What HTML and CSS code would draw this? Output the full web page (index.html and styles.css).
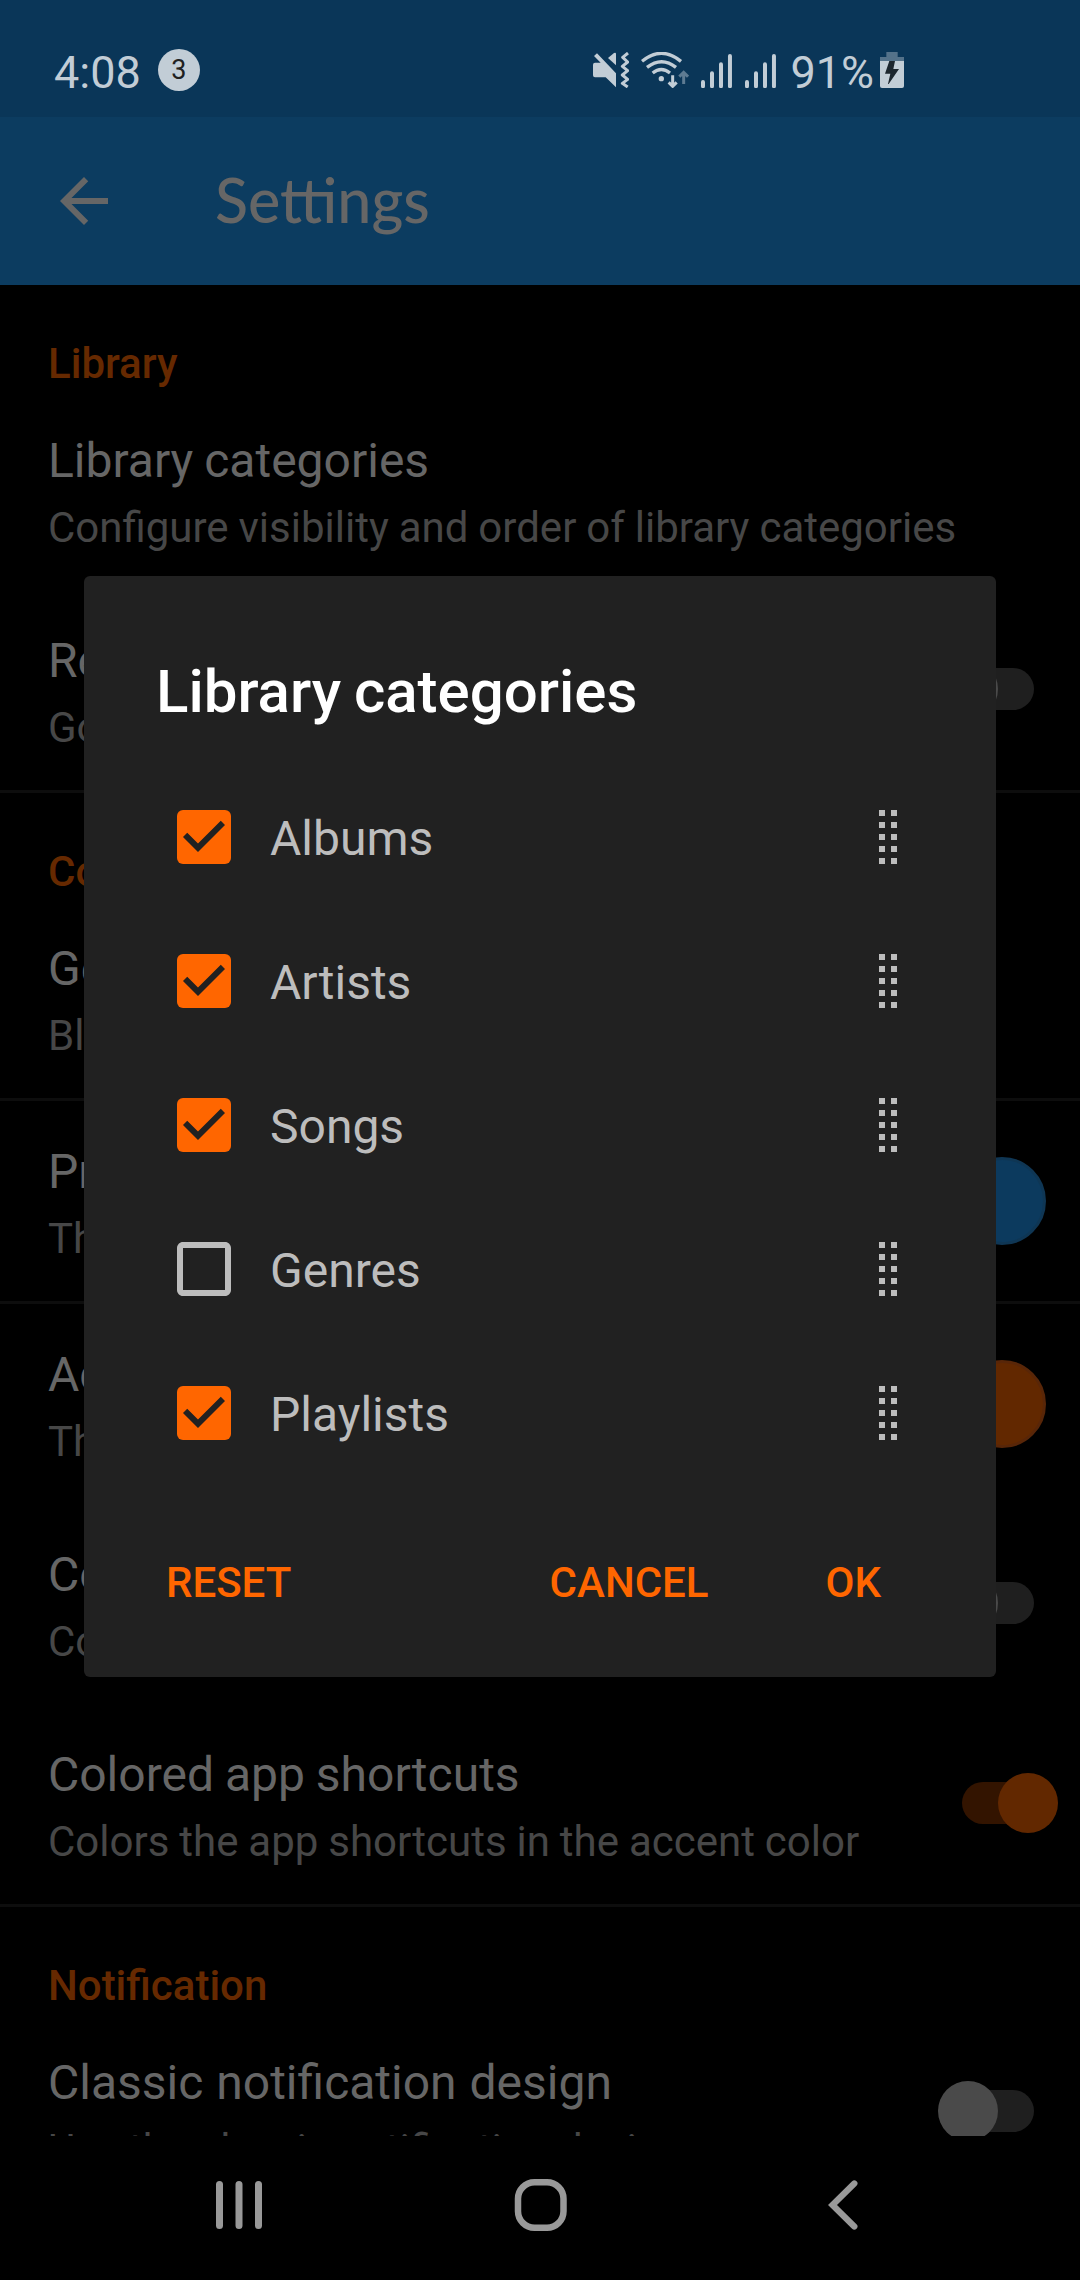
FILE: index.html
```html
<!DOCTYPE html>
<html lang="en">
<head>
<meta charset="utf-8">
<title>Settings</title>
<link rel="stylesheet" href="styles.css">
</head>
<body>
<svg class="defs" width="0" height="0" aria-hidden="true">
  <symbol id="box-on" viewBox="0 0 18 18">
    <rect width="18" height="18" rx="2" fill="#ff6600"/>
    <path d="M7 14l-5-5 1.410-1.410L7 11.170l7.590-7.590L16 5z" fill="#212121"/>
  </symbol>
  <symbol id="box-off" viewBox="0 0 18 18">
    <path d="M16 2v14H2V2h14m0-2H2C.9 0 0 .9 0 2v14c0 1.100.9 2 2 2h14c1.100 0 2-.9 2-2V2c0-1.100-.9-2-2-2z" fill="#bdbdbd"/>
  </symbol>
  <symbol id="drag" viewBox="0 0 18 54">
    <path d="M0 0h6v6H0zM12 0h6v6h-6zM0 12h6v6H0zM12 12h6v6h-6zM0 24h6v6H0zM12 24h6v6h-6zM0 36h6v6H0zM12 36h6v6h-6zM0 48h6v6H0zM12 48h6v6h-6z" fill="#bdbdbd"/>
  </symbol>
  <symbol id="signal" viewBox="0 0 94 103">
    <path d="M6 84v13M33 58v39M60 31v66M87 6v91" stroke="#c2cdd6" stroke-width="12" stroke-linecap="round"/>
  </symbol>
</svg>

<div class="phone">
  <header class="status">
    <div class="status-left">
      <span class="clock">4:08</span>
      <span class="count">3</span>
    </div>
    <div class="status-right">
      <svg class="mute" viewBox="0 0 108 108">
        <path d="M0 38q0-6 6-6h17L3 12l9-8 57 60v42L38 76H6q-6 0-6-6z" fill="#c2cdd6"/>
        <path d="M45 18L63 3q6-3 6 3v34z" fill="#c2cdd6"/>
        <path d="M105 3L89 16l15 14-16 13 16 13-16 13 16 13-16 12 16 11" fill="none" stroke="#c2cdd6" stroke-width="9" stroke-linejoin="round"/>
      </svg>
      <svg class="wifi" viewBox="0 0 144 108">
        <g fill="none" stroke="#c2cdd6" stroke-width="10">
          <path d="M3 28q58-48 117 0"/>
          <path d="M18 46q44-34 87 0"/>
          <path d="M35 63q26-21 52 0"/>
        </g>
        <circle cx="61" cy="80" r="8" fill="#c2cdd6"/>
        <path d="M95 70v32M83 91l12 12 12-12" fill="none" stroke="#c2cdd6" stroke-width="9"/>
        <path d="M128 96V63M115 74l13-13 13 13" fill="none" stroke="#5e7b92" stroke-width="9"/>
      </svg>
      <svg class="signal"><use href="#signal"/></svg>
      <svg class="signal second"><use href="#signal"/></svg>
      <span class="percent">91%</span>
      <svg class="battery" viewBox="0 0 72 108">
        <path d="M19 0h34v15h19v12H0V15h19z" fill="#54728a"/>
        <path d="M0 27h72v75q0 6-6 6H6q-6 0-6-6z" fill="#c2cdd6"/>
        <path d="M28 27h17l-5 24h17L26 96h-2l7-31H15z" fill="#1c262e"/>
      </svg>
    </div>
  </header>

  <div class="toolbar">
    <svg class="back" viewBox="0 0 24 24"><path d="M20 11H7.830l5.590-5.590L12 4l-8 8 8 8 1.410-1.410L7.830 13H20v-2z" fill="#666"/></svg>
    <h1>Settings</h1>
  </div>

  <main class="prefs">
    <h2>Library</h2>
    <div class="pref"><div class="txt"><p class="name">Library categories</p><p class="sum">Configure visibility and order of library categories</p></div></div>
    <div class="pref"><div class="txt"><p class="name">Remember last tab</p><p class="sum">Go to the last opened tab on start</p></div><span class="switch"></span></div>
    <hr>
    <h2>Colors</h2>
    <div class="pref"><div class="txt"><p class="name">General theme</p><p class="sum">Black</p></div></div>
    <hr>
    <div class="pref"><div class="txt"><p class="name">Primary color</p><p class="sum">The primary theme color</p></div><span class="swatch blue"></span></div>
    <hr>
    <div class="pref"><div class="txt"><p class="name">Accent color</p><p class="sum">The accent theme color</p></div><span class="swatch orange"></span></div>
    <div class="pref"><div class="txt"><p class="name">Colored navigation bar</p><p class="sum">Colors the navigation bar</p></div><span class="switch"></span></div>
    <div class="pref"><div class="txt"><p class="name">Colored app shortcuts</p><p class="sum">Colors the app shortcuts in the accent color</p></div><span class="switch on"></span></div>
    <hr>
    <h2>Notification</h2>
    <div class="pref"><div class="txt"><p class="name wide">Classic notification design</p><p class="sum">Use the classic notification design.</p></div><span class="switch"></span></div>
  </main>

  <nav class="navbar">
    <svg viewBox="0 0 60 60"><path d="M11.500 8.500v41M31 8.500v41M50.500 8.500v41" stroke="#999" stroke-width="7" stroke-linecap="round"/></svg>
    <svg viewBox="0 0 60 60"><rect x="8" y="6.250" width="45.500" height="45.500" rx="16.500" fill="none" stroke="#999" stroke-width="6.500"/></svg>
    <svg viewBox="0 0 60 60"><path d="M42.300 7.500L20.500 29 42.300 50.500" fill="none" stroke="#999" stroke-width="6.300" stroke-linecap="round"/></svg>
  </nav>

  <section class="dialog">
    <h3>Library categories</h3>
    <ul>
      <li><svg class="box"><use href="#box-on"/></svg><span>Albums</span><svg class="drag"><use href="#drag"/></svg></li>
      <li><svg class="box"><use href="#box-on"/></svg><span>Artists</span><svg class="drag"><use href="#drag"/></svg></li>
      <li><svg class="box"><use href="#box-on"/></svg><span>Songs</span><svg class="drag"><use href="#drag"/></svg></li>
      <li><svg class="box"><use href="#box-off"/></svg><span>Genres</span><svg class="drag"><use href="#drag"/></svg></li>
      <li><svg class="box"><use href="#box-on"/></svg><span>Playlists</span><svg class="drag"><use href="#drag"/></svg></li>
    </ul>
    <div class="actions">
      <button class="reset">RESET</button>
      <button class="cancel">CANCEL</button>
      <button>OK</button>
    </div>
  </section>
</div>
</body>
</html>
```
FILE: styles.css
```css
* { box-sizing: border-box; margin: 0; padding: 0; }

body {
  background: #000;
  font-family: Roboto, "Liberation Sans", sans-serif;
}

svg { display: block; flex: none; }
.defs { position: absolute; }

.phone {
  position: relative;
  display: flex;
  flex-direction: column;
  width: 1080px;
  height: 2280px;
  overflow: hidden;
  background: #000;
}

/* Status bar */
.status {
  display: flex;
  justify-content: space-between;
  height: 117px;
  padding: 46px 176px 0 54px;
  background: #0a3658;
  color: #c2cdd6;
  flex: none;
}
.status-left, .status-right { display: flex; align-items: flex-start; }
.clock, .percent { font-size: 45px; line-height: 52px; }
.clock { padding-top: 1px; }
.count {
  width: 42px;
  height: 42px;
  margin: 3px 0 0 17px;
  border-radius: 50%;
  background: #c2cdd6;
  color: #212121;
  font-size: 27px;
  line-height: 43px;
  text-align: center;
}
.status-right > svg { margin-top: 6px; }
.mute { width: 36px; height: 36px; }
.wifi { width: 48px; height: 36px; margin-left: 12px; }
.signal { width: 31.300px; height: 34.300px; margin-left: 12px; }
.status-right > .signal { margin-top: 8px; }
.signal.second { margin-left: 12.500px; }
.percent { margin-left: 14px; padding-top: 1px; }
.battery { width: 24px; height: 36px; margin-left: 6px; }

/* App bar */
.toolbar {
  display: flex;
  align-items: center;
  height: 168px;
  padding-left: 48px;
  background: #0c3c60;
  flex: none;
}
.back { width: 72px; height: 72px; }
.toolbar h1 {
  margin: -3px 0 0 95px;
  color: #666;
  font: 500 61px/72px Lato, Roboto, sans-serif;
}

/* Preference list */
.prefs { flex: 1; overflow: hidden; min-height: 0; }
.prefs h2 {
  height: 105px;
  padding: 54px 48px 0;
  color: #662900;
  font-size: 42px;
  font-weight: 500;
  line-height: 49px;
}
.prefs hr { height: 3px; border: 0; background: #0d0d0d; }
.pref {
  display: flex;
  justify-content: space-between;
  height: 200px;
  padding-left: 48px;
}
.txt {
  display: flex;
  flex-direction: column;
  gap: 14px;
  padding-top: 43px;
  white-space: nowrap;
}
.name { color: #666; font-size: 48px; line-height: 56px; word-spacing: -1px; }
.name.wide { word-spacing: 1px; }
.sum { color: #474747; font-size: 42px; line-height: 49px; word-spacing: -.5px; }

.switch {
  position: relative;
  width: 72px;
  height: 42px;
  margin: 78px 46px 0 0;
  border-radius: 21px;
  background: #1f1f1f;
}
.switch::after {
  content: "";
  position: absolute;
  left: -24px;
  top: -9px;
  width: 60px;
  height: 60px;
  border-radius: 50%;
  background: #4a4a4a;
}
.switch.on { background: #331400; }
.switch.on::after { left: 36px; background: #622800; }

.swatch {
  width: 88px;
  height: 88px;
  margin: 56px 34px 0 0;
  border-radius: 50%;
  border: 3px solid;
}
.blue { background: #0c3a5e; border-color: #0f3654; }
.orange { background: #622800; border-color: #582608; }

/* Navigation bar */
.navbar {
  display: flex;
  height: 144px;
  padding: 40px 0 0 208px;
  gap: 242px;
  background: #000;
  flex: none;
}
.navbar svg { width: 60px; height: 60px; }

/* Dialog */
.dialog {
  position: absolute;
  left: 84px;
  top: 576px;
  width: 912px;
  height: 1101px;
  padding: 81px 72px 0;
  border-radius: 6px;
  background: #212121;
}
.dialog h3 {
  color: #fff;
  font-size: 60px;
  font-weight: 500;
  line-height: 70px;
  word-spacing: -2px;
}
.dialog ul { list-style: none; padding-top: 38px; }
.dialog li {
  display: flex;
  align-items: center;
  height: 144px;
  padding: 0 27px 0 21px;
  color: #bdbdbd;
  font-size: 48px;
  line-height: 56px;
}
.box { width: 54px; height: 54px; }
.dialog li span { flex: 1; margin-left: 39px; padding-top: 3px; }
.drag { width: 18px; height: 54px; }
.actions { display: flex; padding: 73px 43px 0 10px; }
.actions button {
  border: 0;
  background: none;
  color: #ff6600;
  font: 500 42px/49px Roboto, sans-serif;
}
.reset { margin-right: auto; }
.cancel { margin-right: 117px; }
```
